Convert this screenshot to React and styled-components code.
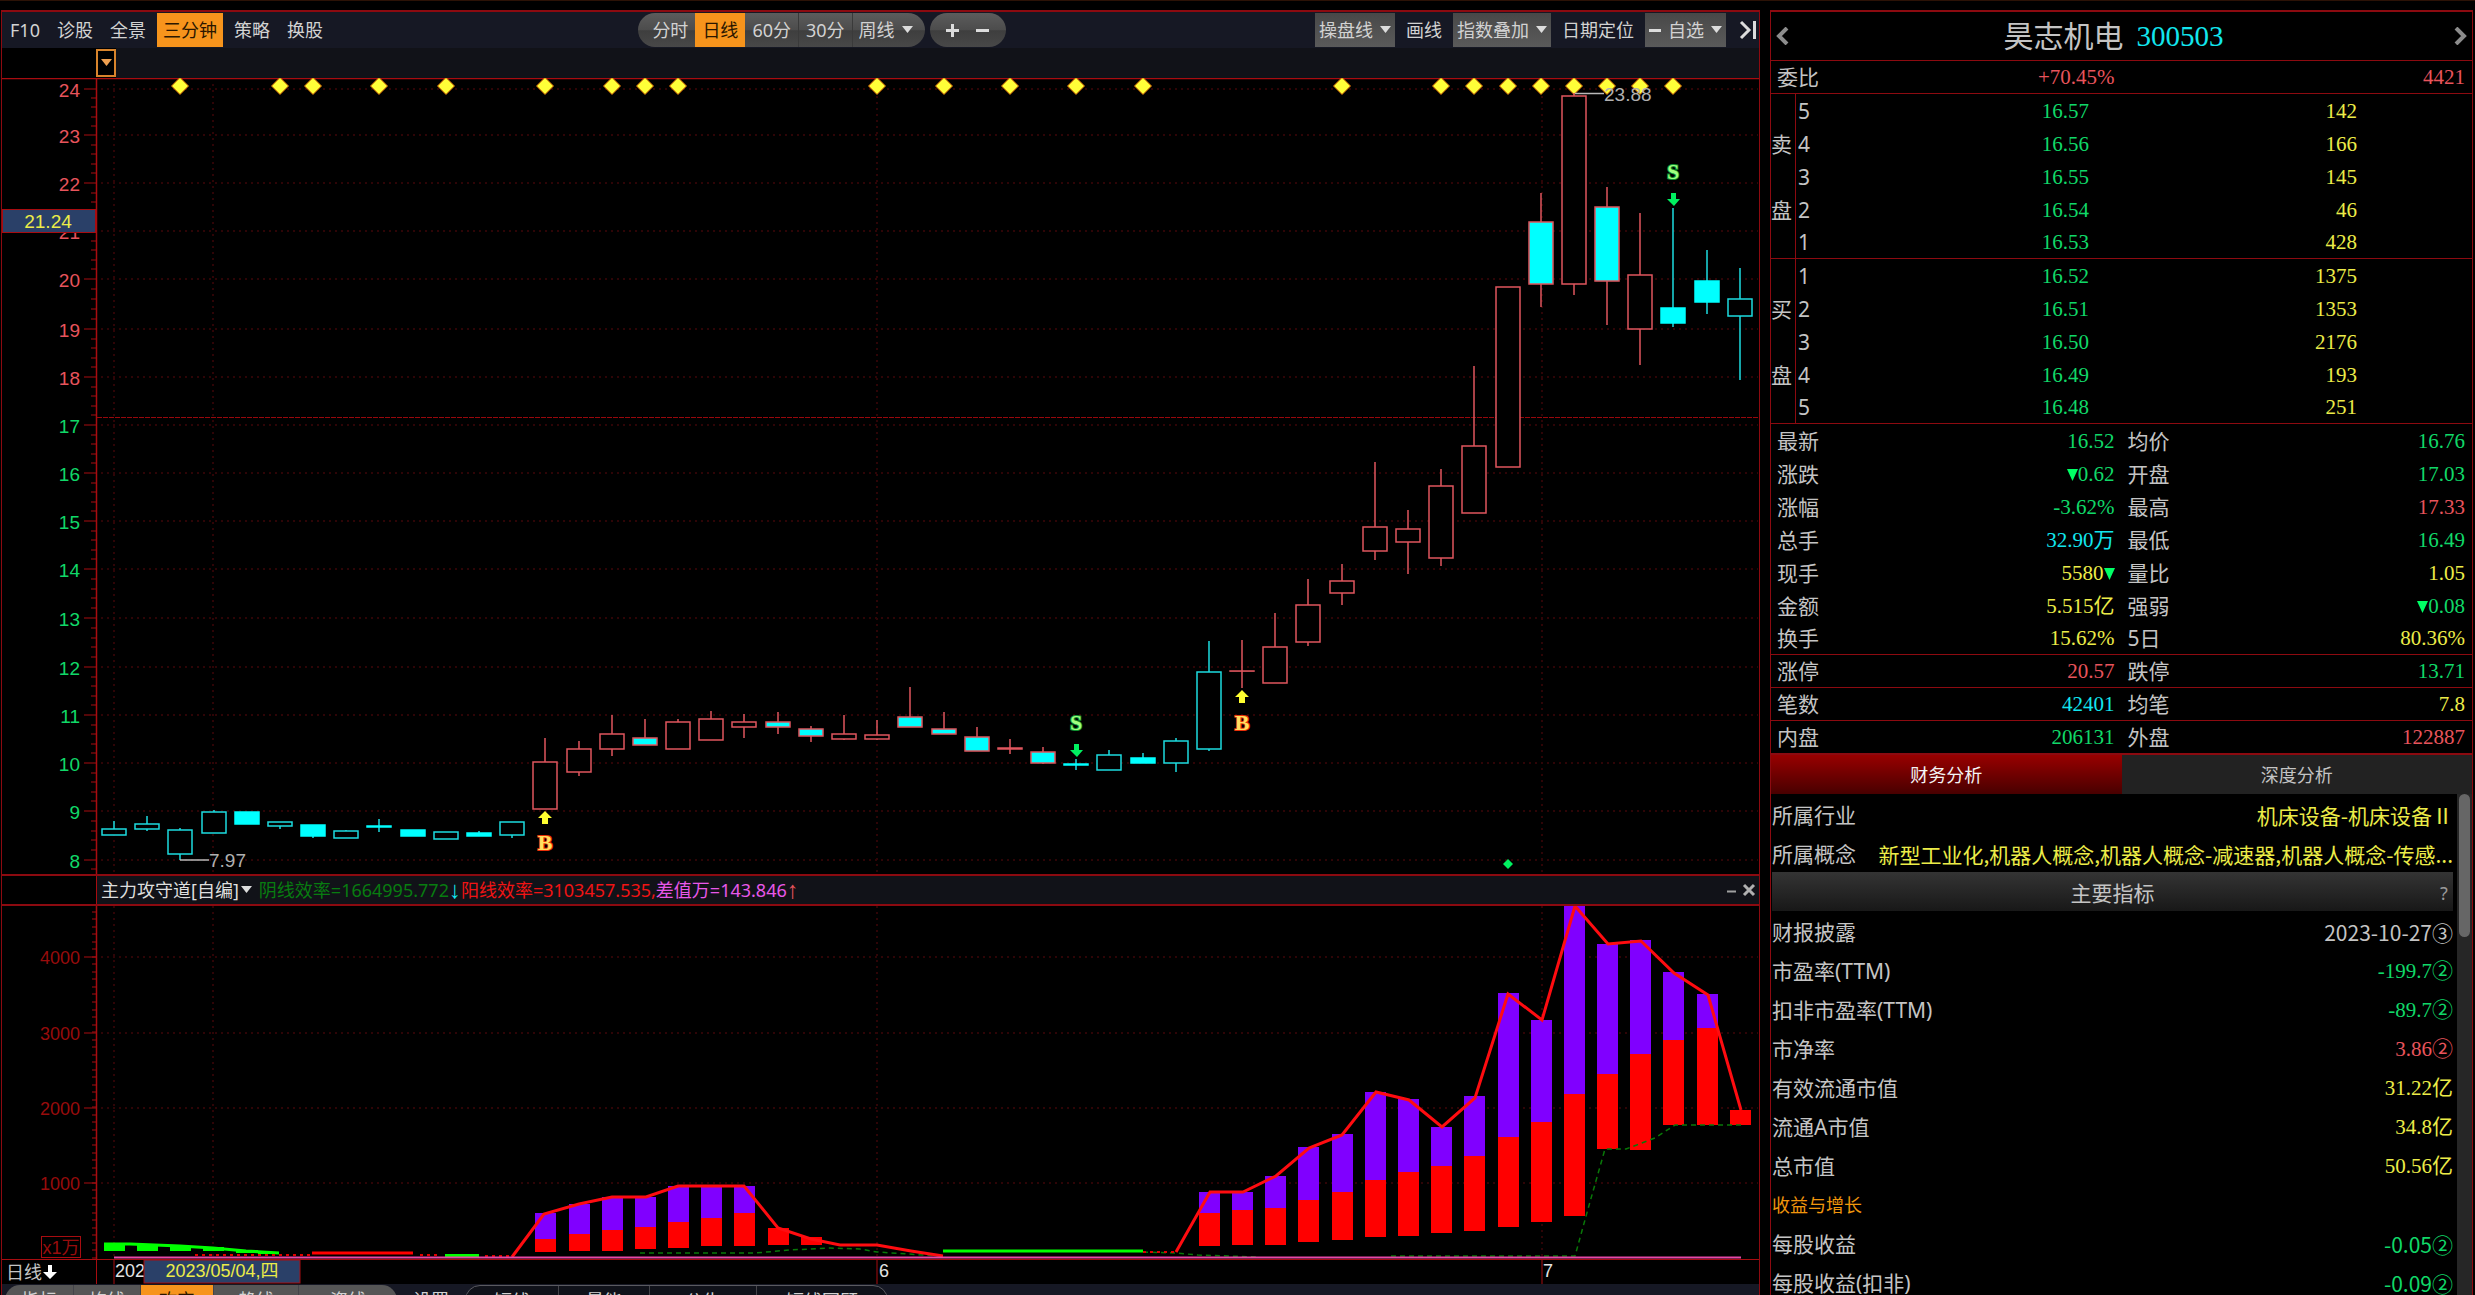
import React from "react";
import styled, { createGlobalStyle } from "styled-components";

const colors = {
  LINE: "#8c0a10",
  GRID: "#2e0406",
  AXIS: "#a80c10",
  RED: "#e8545c",
  GREEN: "#10d868",
  YELLOW: "#ecec48",
  CYAN: "#12e6ee",
  GRAY: "#c4c4c4",
  BAR: "#111218",
  TOOLBAR: "#161824",
  ORANGE: "#f7941c",
};

const SANS = "\"Noto Sans\", \"Noto Sans CJK SC\", sans-serif";
const CJK = "\"Noto Sans CJK SC\", sans-serif";
const ARIAL = "\"Liberation Sans\", \"Noto Sans CJK SC\", sans-serif";
const SERIF = "\"Liberation Serif\", \"Noto Sans CJK SC\", serif";

const GlobalStyle = createGlobalStyle`
  * {
    box-sizing: border-box;
  }

  body {
    margin: 0;
    background-color: #000;
    color: ${colors.GRAY};
    font-family: ${SANS};
    font-size: 18px;
  }

  button, select {
    margin: 0;
    padding: 0;
    border: 0;
    background: none;
    color: inherit;
    font: inherit;
    cursor: pointer;
  }
`;

const Page = styled.div`
  display: grid;
  grid-template-columns: minmax(0, 1fr) 703px;
  column-gap: 10px;
  height: 100vh;
  padding: 9px 2px 0 1px;
  border-top: 1px solid #2c1206;
  overflow: hidden;
`;

const MainPanel = styled.main`
  display: flex;
  flex-direction: column;
  min-height: 0;
  border: 1px solid ${colors.LINE};
  border-top-width: 2px;
  border-bottom: 0;
`;

const Toolbar = styled.div`
  display: flex;
  justify-content: space-between;
  align-items: center;
  flex: none;
  height: 36px;
  padding: 0 0 0 2px;
  background-color: ${colors.TOOLBAR};
`;

const ToolGroup = styled.div`
  display: flex;
  align-items: center;
  gap: 5px;
`;

const ToolButton = styled.button`
  height: 34px;
  padding: 0 6px;
  line-height: 34px;
  white-space: nowrap;
  background-color: ${(props) => (props.$active ? colors.ORANGE : "transparent")};
  color: ${(props) => (props.$active ? "#2a1600" : "#d2d2d2")};
`;

const CollapseButton = styled(ToolButton)`
  display: flex;
  align-items: center;
  padding: 0 2px 0 8px;
`;

const Pill = styled.div`
  display: flex;
  height: 34px;
  padding: ${(props) => props.$pad};
  border-radius: 17px;
  background: linear-gradient(#5c5c5c, #4c4c4c 50%, #3e3e3e 52%, #484848);
  overflow: hidden;
`;

const PillButton = styled(ToolButton)`
  padding: 0 7px;
  border-left: ${(props) => (props.$divided ? "1px solid #3a3a3a" : "0")};
`;

const ZoomButton = styled(ToolButton)`
  display: flex;
  justify-content: center;
  align-items: center;
  width: 30px;
`;

const SelectBox = styled.label`
  display: flex;
  align-items: center;
  gap: 7px;
  height: 34px;
  padding: 0 ${(props) => (props.$plain ? 6 : 4)}px;
  background: ${(props) => (props.$plain ? "none" : "linear-gradient(#484848, #5a5a5a)")};
  border-left: ${(props) => (props.$plain ? "1px solid #3a3a3a" : "0")};
  color: #d2d2d2;

  select {
    height: 34px;
    appearance: none;
    line-height: 34px;
    outline: none;
  }
`;

const SubBar = styled.div`
  display: flex;
  flex: none;
  height: 30px;
  padding-left: 94px;
`;

const SubBarFill = styled.div`
  flex: 1;
  background-color: ${colors.BAR};
`;

const DropButton = styled.button`
  display: flex;
  justify-content: center;
  align-items: center;
  width: 20px;
  height: 28px;
  margin-top: 1px;
  border: 2px solid #d8842c;
`;

const Chart = styled.svg`
  display: block;
  flex: ${(props) => props.$grow} 1 0;
  width: 100%;
  min-height: 0;
  font-family: ${ARIAL};
  font-size: 18px;
`;

const IndicatorBar = styled.div`
  display: flex;
  flex: none;
  height: 32px;
  border-top: 2px solid ${colors.LINE};
  border-bottom: 2px solid ${colors.LINE};
`;

const AxisGap = styled.div`
  width: 95px;
  border-right: 1px solid ${colors.AXIS};
`;

const IndicatorText = styled.div`
  display: flex;
  flex: 1;
  align-items: center;
  padding: 0 3px 0 4px;
  background-color: ${colors.BAR};
  line-height: 28px;
  white-space: nowrap;
`;

const IndicatorName = styled.button`
  display: flex;
  align-items: center;
  gap: 2px;
  margin-right: 7px;
  color: #dedede;
`;

const Part = styled.span`
  color: ${(props) => props.$color};
`;

const Arrow = styled(Part)`
  font-family: ${ARIAL};
  font-size: 24px;
`;

const WindowButtons = styled.div`
  display: flex;
  align-items: center;
  gap: 6px;
  margin-left: auto;

  button {
    display: flex;
  }
`;

const DateRow = styled.div`
  display: flex;
  flex: none;
  height: 25px;
  border-top: 1px solid ${colors.AXIS};
`;

const PeriodButton = styled.button`
  display: flex;
  align-items: center;
  width: 95px;
  padding-left: 4px;
  border-right: 1px solid ${colors.AXIS};
  line-height: 24px;
`;

const DateAxis = styled.svg`
  display: block;
  flex: 1;
  min-width: 0;
  height: 24px;
  font-family: ${ARIAL};
  font-size: 18px;
`;

const Footer = styled.div`
  display: flex;
  flex: none;
  align-items: flex-start;
  gap: 5px;
  height: 11px;
  padding: 1px 3px 0;
  background-color: ${colors.TOOLBAR};
  overflow: hidden;
`;

const FooterPill = styled(Pill)`
  height: 30px;
  padding: 0;
  border-radius: 15px;
  background: ${(props) => (props.$outline ? "#10121a" : "#565656")};
  border: ${(props) => (props.$outline ? "1px solid #5a5a60" : "0")};
`;

const FooterButton = styled(ToolButton)`
  height: 30px;
  padding: 0 ${(props) => props.$pad}px;
  line-height: 30px;
  border-right: ${(props) => (props.$last ? 0 : 1)}px solid #44444a;
`;

const Side = styled.aside`
  display: flex;
  flex-direction: column;
  min-height: 0;
  border: 1px solid ${colors.LINE};
  border-top-width: 2px;
  border-bottom: 0;
  font-size: 21px;
`;

const StockHeader = styled.header`
  display: flex;
  justify-content: space-between;
  align-items: center;
  flex: none;
  height: 49px;
  padding: 0 4px;
  border-bottom: 1px solid ${colors.LINE};

  button {
    display: flex;
  }
`;

const StockTitle = styled.h1`
  display: flex;
  align-items: center;
  gap: 13px;
  margin: 0 16px 0 0;
  font-size: 30px;
  font-weight: 400;
  line-height: 48px;
`;

const StockCode = styled.span`
  color: ${colors.CYAN};
  font-family: ${SERIF};
  font-size: 29px;
  line-height: 42px;
`;

const Table = styled.table`
  flex: none;
  width: 100%;
  border-spacing: 0;
  table-layout: fixed;
`;

const Row = styled.tr`
  height: 33px;

  > * {
    height: 33px;
    padding: 0;
    line-height: 31px;
    padding-top: ${(props) => (props.$line ? 1 : 2)}px;
    border-bottom: ${(props) => props.$line || 0}px solid ${colors.LINE};
  }

  > *:empty {
    padding-top: 0;
  }
`;

const Label = styled.th`
  font-weight: 400;
  text-align: left;
  padding-left: 6px !important;
`;

const SideName = styled.th`
  font-weight: 400;
  text-align: left;
  border-right: 1px solid ${colors.LINE};
`;

const Level = styled.td`
  padding-left: 2px !important;
`;

const Value = styled.td`
  color: ${(props) => props.$color};
  font-family: ${SERIF};
  text-align: right;
  padding-right: ${(props) => (props.$flush ? 0 : 7)}px !important;
`;

const Triangle = styled.svg`
  display: inline-block;
  width: 11px;
  height: 12px;
  fill: #0f6;
`;

const Tabs = styled.div`
  display: flex;
  flex: none;
  height: 39px;
`;

const Tab = styled.button`
  flex: 1;
  background: ${(props) => (props.$active ? "linear-gradient(#980000, #480000)" : "#222")};
  color: ${(props) => (props.$active ? "#f4f4f4" : colors.GRAY)};
  font-size: 18px;
  line-height: 36px;
`;

const Scroll = styled.div`
  display: flex;
  flex: 1;
  min-height: 0;
  overflow: hidden;
`;

const Facts = styled.dl`
  flex: 1;
  min-width: 0;
  margin: 0;
  padding: 0 4px 0 1px;
`;

const Fact = styled.div`
  display: flex;
  justify-content: space-between;
  height: 39px;
  padding-top: 2px;
  line-height: 39px;
  white-space: nowrap;

  dt, dd {
    margin: 0;
  }
`;

const FactValue = styled.dd`
  color: ${(props) => props.$color};
  font-family: ${(props) => (props.$serif ? SERIF : CJK)};
`;

const Section = styled(Fact)`
  color: #f0960c;
  font-size: 18px;
`;

const FactsTitle = styled.div`
  display: flex;
  height: 39px;
  padding-left: 18px;
  background: linear-gradient(#343434, #181818);
  line-height: 42px;

  h2 {
    flex: 1;
    margin: 0;
    font-size: 21px;
    font-weight: 400;
    text-align: center;
  }

  button {
    width: 18px;
    color: #999;
    font-size: 18px;
  }
`;

const Track = styled.div`
  width: 15px;
  padding: 0 2px;
  background-color: #262626;
`;

const Thumb = styled.div`
  height: 143px;
  border-radius: 6px;
  background-color: #666;
`;

// [high, top, bottom, low, kind]
// c: hollow cyan, C: solid cyan, r: hollow red, R: cyan body with a red edge
const candles = [
  [821, 829, 835, 835, "c"], [816, 824, 829, 831, "c"], [828, 830, 854, 860, "c"],
  [810, 812, 833, 833, "c"], [812, 812, 824, 824, "C"], [822, 822, 826, 829, "c"],
  [825, 825, 836, 838, "C"], [830, 831, 838, 838, "c"], [819, 826, 827, 832, "C"],
  [830, 830, 836, 836, "C"], [832, 832, 839, 839, "c"], [831, 833, 836, 836, "C"],
  [822, 822, 835, 838, "c"], [738, 762, 809, 809, "r"], [741, 749, 772, 776, "r"],
  [715, 734, 749, 756, "r"], [719, 738, 745, 745, "R"], [719, 722, 749, 749, "r"],
  [711, 719, 740, 740, "r"], [714, 722, 727, 738, "r"], [712, 722, 727, 734, "R"],
  [726, 729, 736, 742, "R"], [715, 734, 739, 740, "r"], [720, 735, 739, 740, "r"],
  [687, 717, 727, 727, "R"], [712, 729, 734, 734, "R"], [727, 737, 751, 751, "R"],
  [739, 748, 749, 754, "r"], [747, 752, 763, 764, "R"], [759, 764, 765, 770, "C"],
  [750, 755, 770, 770, "c"], [753, 758, 763, 763, "C"], [738, 741, 763, 772, "c"],
  [641, 672, 749, 751, "c"], [640, 671, 671, 688, "r"], [613, 647, 683, 683, "r"],
  [579, 605, 642, 646, "r"], [564, 581, 593, 605, "r"], [462, 527, 551, 560, "r"],
  [510, 529, 542, 574, "r"], [469, 486, 558, 566, "r"], [366, 446, 513, 513, "r"],
  [287, 287, 467, 467, "r"], [193, 222, 284, 307, "R"], [93, 96, 284, 295, "r"],
  [187, 207, 281, 325, "R"], [213, 275, 329, 365, "r"], [208, 308, 323, 327, "C"],
  [250, 281, 302, 314, "C"], [268, 299, 316, 380, "c"],
];

const markers = [2, 5, 6, 8, 10, 13, 15, 16, 17, 23, 25, 27, 29, 31, 37, 40, 41, 42, 43, 44, 45, 46, 47];

const priceY = {
  24: 89, 23: 135, 22: 183, 21: 231, 20: 279, 19: 329, 18: 377, 17: 425, 16: 473,
  15: 521, 14: 569, 13: 618, 12: 667, 11: 715, 10: 763, 9: 811, 8: 860,
};

const signals = [
  { type: "B", at: 13, arrow: 811, text: 843 },
  { type: "S", at: 29, arrow: 744, text: 723 },
  { type: "B", at: 34, arrow: 690, text: 723 },
  { type: "S", at: 47, arrow: 193, text: 172 },
];

// [index, top, split, bottom]
const bars = [
  [13, 1213, 1239, 1252], [14, 1204, 1234, 1251], [15, 1197, 1230, 1251],
  [16, 1197, 1227, 1249], [17, 1186, 1222, 1248], [18, 1186, 1218, 1246],
  [19, 1186, 1213, 1246], [20, 1228, 1228, 1245], [21, 1237, 1237, 1245],
  [33, 1192, 1213, 1246], [34, 1192, 1210, 1245], [35, 1176, 1208, 1245],
  [36, 1147, 1200, 1242], [37, 1134, 1192, 1240], [38, 1092, 1180, 1237],
  [39, 1099, 1172, 1236], [40, 1127, 1166, 1233], [41, 1096, 1156, 1231],
  [42, 993, 1137, 1227], [43, 1020, 1122, 1222], [44, 906, 1094, 1216],
  [45, 944, 1074, 1149], [46, 940, 1054, 1150], [47, 972, 1040, 1125],
  [48, 994, 1028, 1125], [49, 1110, 1110, 1125],
];

const sell = [
  ["5", "16.57", "142", ""], ["4", "16.56", "166", "卖"], ["3", "16.55", "145", ""],
  ["2", "16.54", "46", "盘"], ["1", "16.53", "428", ""],
];

const buy = [
  ["1", "16.52", "1375", ""], ["2", "16.51", "1353", "买"], ["3", "16.50", "2176", ""],
  ["4", "16.49", "193", "盘"], ["5", "16.48", "251", ""],
];

const { RED, GREEN, YELLOW, CYAN, GRAY } = colors;

const stats = [
  ["最新", "16.52", GREEN, "均价", "16.76", GREEN],
  ["涨跌", "▼0.62", GREEN, "开盘", "17.03", GREEN],
  ["涨幅", "-3.62%", GREEN, "最高", "17.33", RED],
  ["总手", "32.90万", CYAN, "最低", "16.49", GREEN],
  ["现手", "5580▼", YELLOW, "量比", "1.05", YELLOW],
  ["金额", "5.515亿", YELLOW, "强弱", "▼0.08", GREEN],
  ["换手", "15.62%", YELLOW, "5日", "80.36%", YELLOW, 1],
  ["涨停", "20.57", RED, "跌停", "13.71", GREEN, 1],
  ["笔数", "42401", CYAN, "均笔", "7.8", YELLOW, 1],
  ["内盘", "206131", GREEN, "外盘", "122887", RED, 2],
];

const facts = [
  ["财报披露", "2023-10-27③", GRAY, false],
  ["市盈率(TTM)", "-199.7②", GREEN, true],
  ["扣非市盈率(TTM)", "-89.7②", GREEN, true],
  ["市净率", "3.86②", RED, true],
  ["有效流通市值", "31.22亿", YELLOW, true],
  ["流通A市值", "34.8亿", YELLOW, true],
  ["总市值", "50.56亿", YELLOW, true],
];

const earnings = [
  ["每股收益", "-0.05②", GREEN, false],
  ["每股收益(扣非)", "-0.09②", GREEN, false],
];

const xOf = (index) => Math.round(114 + index * 33.18);

function Caret({ color = "#dcdcdc" }) {
  return (
    <svg width="11" height="8" aria-hidden="true">
      <path d="M0 0H11L5.5 7Z" fill={color} />
    </svg>
  );
}

function Dropdown({ label, options, plain, dash }) {
  return (
    <SelectBox $plain={plain}>
      {dash && <svg width="12" height="4" aria-hidden="true"><rect width="12" height="3" y="1" fill="#dcdcdc" /></svg>}
      <select aria-label={label}>
        {options.map((option) => <option key={option}>{option}</option>)}
      </select>
      <Caret />
    </SelectBox>
  );
}

function Candle({ index, data }) {
  const [high, top, bottom, low, kind] = data;
  const x = xOf(index);
  const color = kind === "c" || kind === "C" ? "#1cdce0" : "#e0565e";
  const fill = { c: "#000", r: "#000", C: "#00ffff", R: "#00ffff" }[kind];

  return (
    <g stroke={color} strokeWidth="1.5">
      {high < top && <line x1={x} x2={x} y1={high} y2={top} />}
      {low > bottom && <line x1={x} x2={x} y1={bottom} y2={low} />}
      <rect
        x={x - 12}
        y={top}
        width="24"
        height={Math.max(bottom - top, 0.1)}
        fill={fill}
        stroke={kind === "C" ? "#00ffff" : color}
      />
    </g>
  );
}

function Signal({ type, at, arrow, text }) {
  const x = xOf(at);
  const isBuy = type === "B";

  return (
    <g>
      <path
        d={isBuy
          ? `M${x} ${arrow}l7 7h-4v6h-6v-6h-4z`
          : `M${x - 2} ${arrow}h5v6h4l-6 7l-7 -7h4z`}
        fill={isBuy ? "#ffff30" : "#00f060"}
      />
      <text
        x={x}
        y={text + 7}
        textAnchor="middle"
        fontFamily="Liberation Serif, serif"
        fontWeight="700"
        fontSize="22"
        fill={isBuy ? "#ffe060" : "#a0ff80"}
        stroke={isBuy ? "#e83008" : "#109030"}
        strokeWidth="2"
        paintOrder="stroke"
      >
        {type}
      </text>
    </g>
  );
}

function PriceChart() {
  const prices = Object.keys(priceY).map(Number);
  const ticks = [];

  for (let price = 8; price < 24; price += 1) {
    for (let step = 1; step < 5; step += 1) {
      ticks.push(Math.round(priceY[price] + ((priceY[price + 1] - priceY[price]) * step) / 5));
    }
  }

  return (
    <Chart $grow={796} viewBox="2 78 1757 796" preserveAspectRatio="xMinYMin meet" role="img" aria-label="日线">
      <g stroke={colors.GRID} strokeWidth="2" strokeDasharray="2 4">
        {prices.map((price) => <line key={price} x1="101" x2="1758" y1={priceY[price]} y2={priceY[price]} />)}
        {[114, 213, 877, 1542].map((x) => <line key={x} x1={x} x2={x} y1="84" y2="874" />)}
      </g>
      <g stroke={colors.AXIS}>
        <line x1="2" x2="1759" y1="78.5" y2="78.5" strokeWidth="1.5" />
        <line x1="96.5" x2="96.5" y1="78" y2="874" strokeWidth="1.5" />
        <line x1="97" x2="1759" y1="417.5" y2="417.5" stroke="#98080c" strokeDasharray="5 1" />
        {prices.map((price) => <line key={price} x1="84" x2="96" y1={priceY[price]} y2={priceY[price]} />)}
        {[...ticks, 869].map((y) => <line key={y} x1="91" x2="96" y1={y} y2={y} />)}
      </g>
      <g fontSize="19">
        {prices.map((price) => (
          <text
            key={price}
            x="80"
            y={priceY[price] + 1}
            textAnchor="end"
            dominantBaseline="central"
            fill={price > 17 ? RED : GREEN}
          >
            {price}
          </text>
        ))}
        <rect x="2.5" y="209.5" width="93" height="23" fill="#2a4068" stroke={colors.AXIS} />
        <text x="48" y="221" textAnchor="middle" dominantBaseline="central" fill={YELLOW}>21.24</text>
      </g>
      {markers.map((index) => (
        <path
          key={index}
          d={`M${xOf(index)} 77.5l8.5 8.5l-8.5 8.5l-8.5 -8.5z`}
          fill="#ffff38"
          stroke="#d06000"
          strokeWidth="1"
        />
      ))}
      {candles.map((data, index) => <Candle key={index} index={index} data={data} />)}
      {signals.map((signal) => <Signal key={signal.at + signal.type} {...signal} />)}
      <g stroke="#b8b8b8" strokeWidth="1.5">
        <line x1="1575" x2="1604" y1="93.5" y2="93.5" />
        <line x1="180" x2="209" y1="860" y2="860" />
      </g>
      <g fill="#b0b0b0" fontSize="19">
        <text x="1604" y="94" dominantBaseline="central">23.88</text>
        <text x="209" y="860" dominantBaseline="central">7.97</text>
      </g>
      <path d="M1508 859l5 5l-5 5l-5 -5z" fill="#00f060" />
    </Chart>
  );
}

function PowerChart() {
  const levels = [[4000, 957], [3000, 1033], [2000, 1108], [1000, 1183]];
  const ticks = [];

  for (let step = 0; step < 47; step += 1) {
    ticks.push(Math.round(1258 - step * 7.53));
  }

  return (
    <Chart $grow={353} viewBox="2 906 1757 353" preserveAspectRatio="xMinYMin meet" role="img" aria-label="主力攻守道">
      <g stroke={colors.GRID} strokeWidth="2" strokeDasharray="2 4">
        {levels.map(([value, y]) => <line key={value} x1="101" x2="1758" y1={y} y2={y} />)}
        {[114, 213, 877, 1542].map((x) => <line key={x} x1={x} x2={x} y1="906" y2="1256" />)}
      </g>
      <g stroke={colors.AXIS}>
        <line x1="96.5" x2="96.5" y1="906" y2="1259" strokeWidth="1.5" />
        {levels.map(([value, y]) => <line key={value} x1="84" x2="96" y1={y} y2={y} />)}
        {ticks.map((y) => <line key={y} x1="92" x2="96" y1={y} y2={y} />)}
        <rect x="41.5" y="1236.5" width="39" height="21" fill="none" />
      </g>
      <g fill="#980c0c">
        {levels.map(([value, y]) => (
          <text key={value} x="80" y={y + 1} textAnchor="end" dominantBaseline="central">{value}</text>
        ))}
        <text x="61" y="1248" textAnchor="middle" dominantBaseline="central">x1万</text>
      </g>
      {bars.map(([index, top, split, bottom]) => (
        <g key={index}>
          <rect x={xOf(index) - 10} y={top} width="21" height={split - top} fill="#8000ff" />
          <rect x={xOf(index) - 10} y={split} width="21" height={bottom - split} fill="#ff0000" />
        </g>
      ))}
      <path
        d="M104 1243h21v8h-21zM137 1244h21v7h-21zM170 1246h21v5h-21zM203 1247h21v4h-21zM236 1250h22v3h-22zM258 1252h21v2h-21zM445 1254h34v4h-34z"
        fill="#00ff00"
      />
      <path d="M104 1244L130 1244L180 1246L213 1248L246 1251L279 1253M943 1251H1143" fill="none" stroke="#00ff00" strokeWidth="3" />
      <path
        d="M640 1253H755L790 1250L830 1248L860 1249L877 1252L940 1256M1143 1252L1175 1253L1198 1255L1258 1257M1391 1256H1575L1588 1209L1605 1149H1626L1655 1138L1675 1125H1741"
        fill="none"
        stroke="#087808"
        strokeWidth="1.5"
        strokeDasharray="5 4"
      />
      <path d="M195 1255H312M420 1255H440M485 1256H510M1143 1252H1176" fill="none" stroke="#e00000" strokeWidth="2" strokeDasharray="3 4" />
      <path d="M312 1253H413" stroke="#ff0000" strokeWidth="3" />
      <path
        d="M512 1257L544 1214L579 1204L612 1197H646L678 1186H744L778 1228L811 1239L840 1245H877L911 1251L943 1256M1176 1252L1210 1192H1243L1276 1176L1309 1148L1342 1135L1376 1092L1409 1100L1442 1127L1475 1098L1508 994L1542 1020L1575 906L1608 944L1641 941L1674 973L1708 995L1741 1110"
        fill="none"
        stroke="#ff0c10"
        strokeWidth="3"
      />
      <line x1="114" x2="1741" y1="1257.5" y2="1257.5" stroke="#e848a8" strokeWidth="2" />
    </Chart>
  );
}

function DateLabels() {
  return (
    <DateAxis viewBox="97 1260 1662 24" preserveAspectRatio="xMinYMin meet" role="img" aria-label="日期">
      <g stroke={colors.AXIS}>
        {[114, 877, 1542].map((x) => <line key={x} x1={x} x2={x} y1="1260" y2="1284" />)}
      </g>
      <g fill="#e4e4e4">
        <text x="115" y="1271" dominantBaseline="central">202</text>
        <text x="879" y="1271" dominantBaseline="central">6</text>
        <text x="1543" y="1271" dominantBaseline="central">7</text>
      </g>
      <rect x="144" y="1260" width="156" height="23" fill="#2a4068" stroke={colors.AXIS} />
      <text x="222" y="1271" textAnchor="middle" dominantBaseline="central" fill={YELLOW}>2023/05/04,四</text>
    </DateAxis>
  );
}

function Figure({ text }) {
  return text.split(/(▼)/).map((part, index) => (
    part === "▼"
      ? <Triangle key={index} viewBox="0 0 11 12" role="img" aria-label="▼"><path d="M0 0H11L5.5 12Z" /></Triangle>
      : part
  ));
}

function QuoteRows({ rows }) {
  return (
    <tbody>
      {rows.map(([level, price, volume, side], index) => (
        <Row key={level} $line={index === rows.length - 1 ? 1 : 0}>
          <SideName>{side}</SideName>
          <Level>{level}</Level>
          <Value $color={GREEN} $flush>{price}</Value>
          <Value $color={YELLOW} $flush>{volume}</Value>
          <td />
        </Row>
      ))}
    </tbody>
  );
}

function StatRow({ data }) {
  const [name, value, color, nextName, nextValue, nextColor, line] = data;

  return (
    <Row $line={line}>
      <Label scope="row">{name}</Label>
      <Value $color={color}><Figure text={value} /></Value>
      <Label scope="row">{nextName}</Label>
      <Value $color={nextColor}><Figure text={nextValue} /></Value>
    </Row>
  );
}

function FactRow({ data }) {
  const [name, value, color, serif] = data;

  return (
    <Fact>
      <dt>{name}</dt>
      <FactValue $color={color} $serif={serif}>{value}</FactValue>
    </Fact>
  );
}

export default function App() {
  return (
    <>
      <GlobalStyle />
      <Page>
        <MainPanel>
          <Toolbar>
            <ToolGroup>
              {["F10", "诊股", "全景", "三分钟", "策略", "换股"].map((name) => (
                <ToolButton key={name} $active={name === "三分钟"}>{name}</ToolButton>
              ))}
            </ToolGroup>
            <ToolGroup>
              <Pill $pad="0 6px 0 7px">
                <PillButton>分时</PillButton>
                <PillButton $active>日线</PillButton>
                <PillButton>60分</PillButton>
                <PillButton $divided>30分</PillButton>
                <Dropdown plain label="周期" options={["周线", "月线", "季线", "年线"]} />
              </Pill>
              <Pill $pad="0 8px">
                <ZoomButton aria-label="放大">
                  <svg width="13" height="13"><path d="M5 0h3v5h5v3H8v5H5V8H0V5h5z" fill="#dcdcdc" /></svg>
                </ZoomButton>
                <ZoomButton aria-label="缩小">
                  <svg width="13" height="13"><path d="M0 5h13v3H0z" fill="#dcdcdc" /></svg>
                </ZoomButton>
              </Pill>
            </ToolGroup>
            <ToolGroup>
              <Dropdown label="操盘线" options={["操盘线"]} />
              <ToolButton>画线</ToolButton>
              <Dropdown label="指数叠加" options={["指数叠加"]} />
              <ToolButton>日期定位</ToolButton>
              <Dropdown dash label="自选" options={["自选"]} />
              <CollapseButton aria-label="收起">
                <svg width="18" height="20" fill="none" stroke="#dcdcdc" strokeWidth="3">
                  <path d="M2 2l8 8l-8 8M15.500 1v18" />
                </svg>
              </CollapseButton>
            </ToolGroup>
          </Toolbar>
          <SubBar>
            <DropButton aria-label="展开"><Caret color="#f0a050" /></DropButton>
            <SubBarFill />
          </SubBar>
          <PriceChart />
          <IndicatorBar>
            <AxisGap />
            <IndicatorText>
              <IndicatorName>
                主力攻守道[自编]
                <Caret />
              </IndicatorName>
              <Part $color="#087c10">阴线效率=1664995.772</Part>
              <Arrow $color={CYAN}>↓</Arrow>
              <Part $color="#f01414">阳线效率=3103457.535,</Part>
              <Part $color="#e858e8">差值万=143.846</Part>
              <Arrow $color={RED}>↑</Arrow>
              <WindowButtons>
                <button aria-label="最小化">
                  <svg width="9" height="14"><path d="M0 8.500h9" stroke="#a0a0a0" strokeWidth="2" /></svg>
                </button>
                <button aria-label="关闭">
                  <svg width="14" height="14"><path d="M2 2l10 10M12 2l-10 10" stroke="#b0b0b0" strokeWidth="3" /></svg>
                </button>
              </WindowButtons>
            </IndicatorText>
          </IndicatorBar>
          <PowerChart />
          <DateRow>
            <PeriodButton>
              日线
              <svg width="16" height="16" aria-hidden="true"><path d="M6 1h4v7h5l-7 7l-7-7h5z" fill="#fff" /></svg>
            </PeriodButton>
            <DateLabels />
          </DateRow>
          <Footer>
            <FooterPill>
              <FooterButton $pad={16}>指标</FooterButton>
              <FooterButton $pad={15}>均线</FooterButton>
              <FooterButton $pad={18} $active>攻守</FooterButton>
              <FooterButton $pad={24}>趋线</FooterButton>
              <FooterButton $pad={31} $last>资线</FooterButton>
            </FooterPill>
            <FooterButton $pad={11} $last>设置</FooterButton>
            <FooterPill $outline>
              <FooterButton $pad={28}>短线</FooterButton>
              <FooterButton $pad={27}>量能</FooterButton>
              <FooterButton $pad={35}>公告</FooterButton>
              <FooterButton $pad={29} $last>短线回顾</FooterButton>
            </FooterPill>
          </Footer>
        </MainPanel>
        <Side>
          <StockHeader>
            <button aria-label="上一只">
              <svg width="14" height="18" fill="none" stroke="#8c8c8c" strokeWidth="4"><path d="M12 1L4 9l8 8" /></svg>
            </button>
            <StockTitle>
              昊志机电
              <StockCode>300503</StockCode>
            </StockTitle>
            <button aria-label="下一只">
              <svg width="14" height="18" fill="none" stroke="#8c8c8c" strokeWidth="4"><path d="M2 1l8 8l-8 8" /></svg>
            </button>
          </StockHeader>
          <Table>
            <tbody>
              <StatRow data={["委比", "+70.45%", RED, "", "4421", RED, 1]} />
            </tbody>
          </Table>
          <Table>
            <colgroup>
              <col width="25" />
              <col width="40" />
              <col />
              <col width="268" />
              <col width="115" />
            </colgroup>
            <QuoteRows rows={sell} />
            <QuoteRows rows={buy} />
          </Table>
          <Table>
            <tbody>
              {stats.map((data) => <StatRow key={data[0]} data={data} />)}
            </tbody>
          </Table>
          <Tabs role="tablist">
            <Tab role="tab" aria-selected="true" $active>财务分析</Tab>
            <Tab role="tab" aria-selected="false">深度分析</Tab>
          </Tabs>
          <Scroll>
            <Facts>
              <FactRow data={["所属行业", "机床设备-机床设备Ⅱ", YELLOW, false]} />
              <FactRow data={["所属概念", "新型工业化,机器人概念,机器人概念-减速器,机器人概念-传感...", YELLOW, false]} />
              <FactsTitle>
                <h2>主要指标</h2>
                <button aria-label="说明">?</button>
              </FactsTitle>
              {facts.map((data) => <FactRow key={data[0]} data={data} />)}
              <Section><dt>收益与增长</dt></Section>
              {earnings.map((data) => <FactRow key={data[0]} data={data} />)}
            </Facts>
            <Track><Thumb /></Track>
          </Scroll>
        </Side>
      </Page>
    </>
  );
}
